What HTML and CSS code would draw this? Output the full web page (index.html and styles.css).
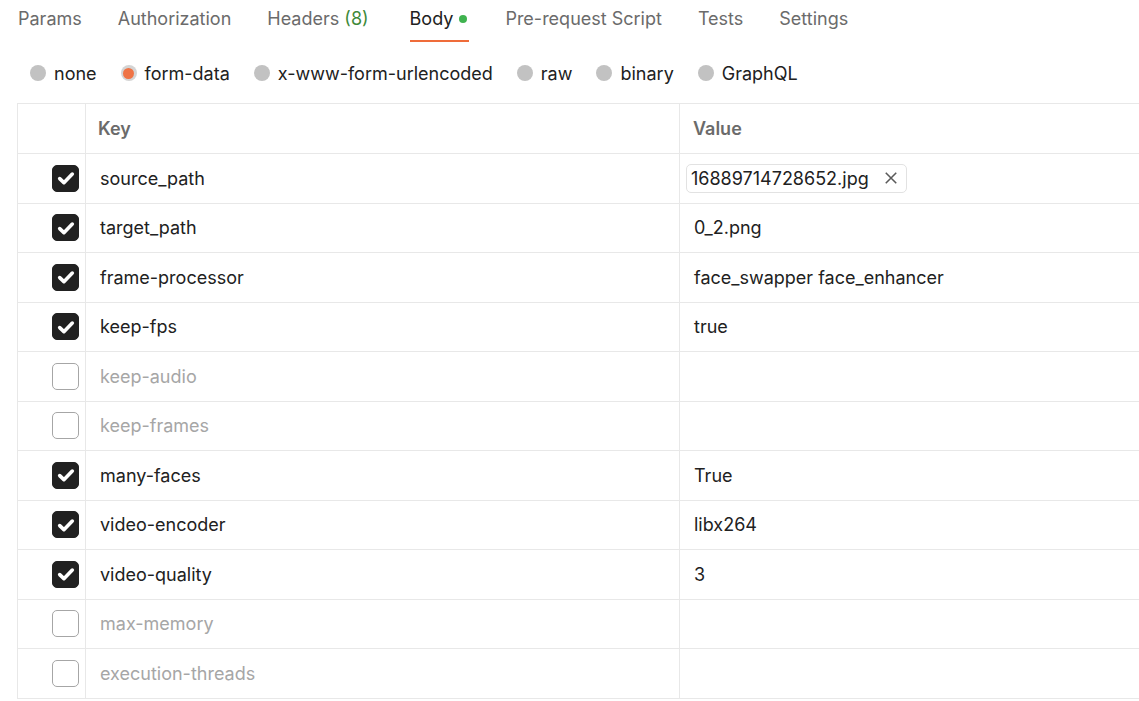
FILE: index.html
```html
<!DOCTYPE html>
<html lang="en">
<head>
<meta charset="utf-8">
<title>Body</title>
<link rel="stylesheet" href="styles.css">
</head>
<body>
<nav class="tabs">
  <span class="tab">Params</span>
  <span class="tab">Authorization</span>
  <span class="tab headers">Headers <span class="count">(8)</span></span>
  <span class="tab active">Body<span class="dot"></span></span>
  <span class="tab">Pre-request Script</span>
  <span class="tab">Tests</span>
  <span class="tab">Settings</span>
</nav>

<div class="radios">
  <label class="radio"><span class="circle"></span>none</label>
  <label class="radio"><span class="circle on"></span>form-data</label>
  <label class="radio"><span class="circle"></span>x-www-form-urlencoded</label>
  <label class="radio"><span class="circle"></span>raw</label>
  <label class="radio"><span class="circle"></span>binary</label>
  <label class="radio"><span class="circle"></span>GraphQL</label>
</div>

<div class="table">
  <div class="row head">
    <div class="cell chk"></div>
    <div class="cell key">Key</div>
    <div class="cell val">Value</div>
  </div>
  <div class="row">
    <div class="cell chk"><span class="box checked"><svg viewBox="0 0 16 16"><path d="M3.8 8.4l2.8 2.7L12.2 5.4"/></svg></span></div>
    <div class="cell key">source_path</div>
    <div class="cell val"><span class="file">16889714728652.jpg<svg class="x" viewBox="0 0 12 12"><path d="M1.5 1.5l9 9M10.5 1.5l-9 9"/></svg></span></div>
  </div>
  <div class="row">
    <div class="cell chk"><span class="box checked"><svg viewBox="0 0 16 16"><path d="M3.8 8.4l2.8 2.7L12.2 5.4"/></svg></span></div>
    <div class="cell key">target_path</div>
    <div class="cell val">0_2.png</div>
  </div>
  <div class="row">
    <div class="cell chk"><span class="box checked"><svg viewBox="0 0 16 16"><path d="M3.8 8.4l2.8 2.7L12.2 5.4"/></svg></span></div>
    <div class="cell key">frame-processor</div>
    <div class="cell val">face_swapper face_enhancer</div>
  </div>
  <div class="row">
    <div class="cell chk"><span class="box checked"><svg viewBox="0 0 16 16"><path d="M3.8 8.4l2.8 2.7L12.2 5.4"/></svg></span></div>
    <div class="cell key">keep-fps</div>
    <div class="cell val">true</div>
  </div>
  <div class="row off">
    <div class="cell chk"><span class="box"></span></div>
    <div class="cell key">keep-audio</div>
    <div class="cell val"></div>
  </div>
  <div class="row off">
    <div class="cell chk"><span class="box"></span></div>
    <div class="cell key">keep-frames</div>
    <div class="cell val"></div>
  </div>
  <div class="row">
    <div class="cell chk"><span class="box checked"><svg viewBox="0 0 16 16"><path d="M3.8 8.4l2.8 2.7L12.2 5.4"/></svg></span></div>
    <div class="cell key">many-faces</div>
    <div class="cell val">True</div>
  </div>
  <div class="row">
    <div class="cell chk"><span class="box checked"><svg viewBox="0 0 16 16"><path d="M3.8 8.4l2.8 2.7L12.2 5.4"/></svg></span></div>
    <div class="cell key">video-encoder</div>
    <div class="cell val">libx264</div>
  </div>
  <div class="row">
    <div class="cell chk"><span class="box checked"><svg viewBox="0 0 16 16"><path d="M3.8 8.4l2.8 2.7L12.2 5.4"/></svg></span></div>
    <div class="cell key">video-quality</div>
    <div class="cell val">3</div>
  </div>
  <div class="row off">
    <div class="cell chk"><span class="box"></span></div>
    <div class="cell key">max-memory</div>
    <div class="cell val"></div>
  </div>
  <div class="row off">
    <div class="cell chk"><span class="box"></span></div>
    <div class="cell key">execution-threads</div>
    <div class="cell val"></div>
  </div>
</div>
</body>
</html>
```

FILE: styles.css
```css
* { box-sizing: border-box; }
html, body {
  margin: 0;
  padding: 0;
  background: #fff;
  overflow: hidden;
}
body {
  font-family: Inter, "Noto Sans", sans-serif;
  font-size: 18px;
  color: #212121;
  width: 1139px;
  height: 701px;
  overflow: hidden;
}

.tabs {
  display: flex;
  gap: 36px;
  padding-left: 18px;
  height: 43px;
  align-items: flex-start;
}
.tab {
  color: #6b6b6b;
  height: 43px;
  line-height: 38px;
  display: flex;
  align-items: flex-start;
  white-space: pre;
  border-bottom: 3px solid transparent;
}
.tab.headers { padding-right: 5px; }
.tab.active {
  color: #212121;
  border-bottom: 2px solid #ef6c3a;
  height: 42px;
  padding-right: 2px;
}
.count { color: #3f8a3a; }
.dot {
  width: 8px;
  height: 8px;
  border-radius: 50%;
  background: #3fb34f;
  margin-left: 6px;
  margin-top: 15px;
}

.radios {
  display: flex;
  align-items: center;
  height: 60px;
  padding-left: 30px;
  gap: 24px;
}
.radio {
  display: flex;
  align-items: center;
  gap: 8px;
  color: #212121;
}
.circle {
  width: 16px;
  height: 16px;
  border-radius: 50%;
  background: #c2c2c2;
  display: inline-flex;
  align-items: center;
  justify-content: center;
}
.circle.on {
  background: #d4d4d4;
}
.circle.on::after {
  content: "";
  width: 11px;
  height: 11px;
  border-radius: 50%;
  background: #ef7345;
}

.table {
  margin-left: 17px;
  width: 1122px;
  border-left: 1px solid #e8e8e8;
  border-top: 1px solid #e8e8e8;
}
.row {
  display: grid;
  grid-template-columns: 68px 594px 1fr;
  height: 49.5px;
  border-bottom: 1px solid #e8e8e8;
}
.row.head { height: 50px; }
.cell {
  display: flex;
  align-items: center;
  border-right: 1px solid #e8e8e8;
  min-width: 0;
}
.cell.chk {
  justify-content: flex-end;
  padding-right: 6px;
}
.cell.key { padding-left: 14px; }
.cell.val { padding-left: 14px; border-right: none; }
.head .cell { font-weight: 600; color: #6b6b6b; }
.head .cell.key { padding-left: 12px; }
.head .cell.val { padding-left: 13px; }
.row.off .cell.key { color: #a6a6a6; }

.box {
  width: 27px;
  height: 27px;
  border-radius: 5px;
  border: 1px solid #a6a6a6;
  background: #fff;
  display: inline-flex;
  align-items: center;
  justify-content: center;
}
.box.checked {
  background: #212121;
  border-color: #212121;
}
.box svg {
  width: 24px;
  height: 24px;
  fill: none;
  stroke: #fff;
  stroke-width: 2.4;
  stroke-linecap: round;
  stroke-linejoin: round;
}

.cell.val .file {
  margin-left: -8px;
  display: inline-flex;
  align-items: center;
  height: 29px;
  padding: 0 8px 0 4px;
  border: 1px solid #e2e2e2;
  border-radius: 5px;
}
.x {
  width: 14px;
  height: 14px;
  margin-left: 15px;
  fill: none;
  stroke: #5a5a5a;
  stroke-width: 1.3;
}
```
